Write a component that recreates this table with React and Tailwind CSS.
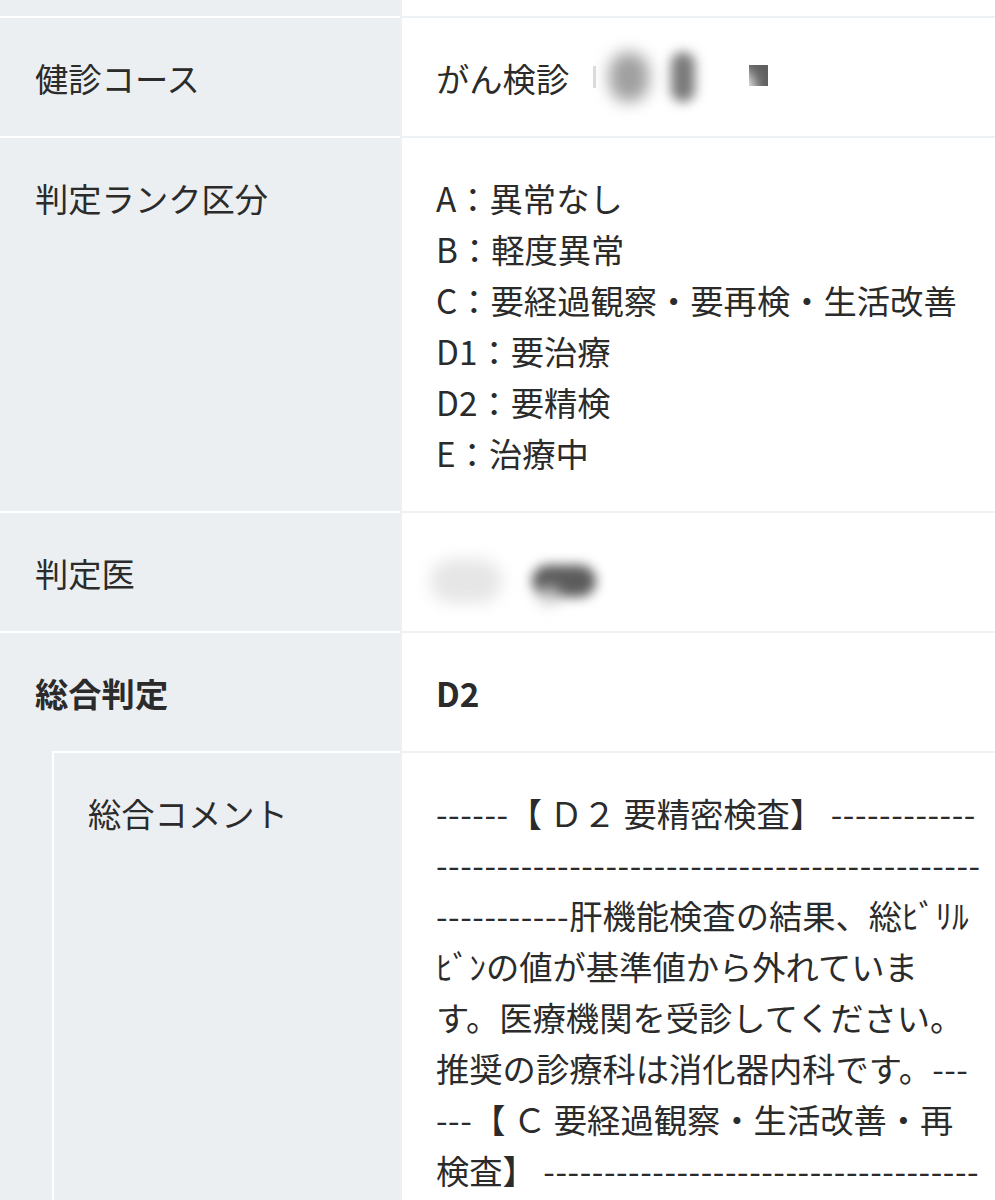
import React from "react";

const LBL = "bg-[#ebeff1]";

function Row({ label, children, bold }) {
  return (
    <div className="flex">
      <div className={`w-[400px] shrink-0 ${LBL} border-t-2 border-white px-[35px] py-[33.5px] ${bold ? "font-bold" : ""}`}>
        {label}
      </div>
      <div className={`flex-1 border-t-2 border-l-2 border-[#eef1f3] pl-[34px] pr-[20px] py-[33.5px] ${bold ? "font-bold" : ""}`}>
        {children}
      </div>
    </div>
  );
}

function D({ n }) {
  return <span className="tracking-[0.55px]">{"-".repeat(n)}</span>;
}

const commentLines = [
  <>
    <D n={6} />【 Ｄ２ 要精密検査】 <D n={12} />
  </>,
  <D n={45} />,
  <>
    <D n={11} />肝機能検査の結果、総ﾋﾞﾘﾙ
  </>,
  <>ﾋﾞﾝの値が基準値から外れていま</>,
  <>す。医療機関を受診してください。</>,
  <>
    推奨の診療科は消化器内科です。<D n={3} />
  </>,
  <>
    <D n={3} />【 Ｃ 要経過観察・生活改善・再
  </>,
  <>
    検査】 <D n={36} />
  </>,
];

export default function App() {
  return (
    <div className="w-[995px] min-h-[1200px] bg-white text-[#2b2b2b] text-[33.3px] leading-[51px] font-['Noto_Sans_CJK_JP','Noto_Sans',sans-serif] overflow-hidden">
      <div className="flex h-[16px]">
        <div className={`w-[400px] shrink-0 ${LBL}`} />
        <div className="flex-1 border-l-2 border-[#eef1f3]" />
      </div>

      <Row label="健診コース">
        <div className="flex items-center h-[51px]">
          <span>がん検診</span>
          <span className="ml-[24px] w-[3px] h-[22px] bg-[#dcdcdc]" />
          <span className="ml-[13px] w-[40px] h-[50px] rounded-full bg-[#a0a0a0] blur-[8px]" />
          <span className="ml-[22px] w-[24px] h-[50px] rounded-full bg-[#7a7a7a] blur-[6px]" />
          <span className="relative ml-[54px] -mt-[4px] w-[19px] h-[21px] bg-[#5f5f5f]">
            <span className="absolute -left-[34px] top-[4px] w-[40px] h-[40px] rounded-full bg-white blur-[7px]" />
          </span>
        </div>
      </Row>

      <Row label="判定ランク区分">
        <div>A：異常なし</div>
        <div>B：軽度異常</div>
        <div>C：要経過観察・要再検・生活改善</div>
        <div>D1：要治療</div>
        <div>D2：要精検</div>
        <div>E：治療中</div>
      </Row>

      <Row label="判定医">
        <div className="flex items-center h-[51px]">
          <span className="-ml-[6px] mt-[18px] w-[72px] h-[44px] rounded-full bg-[#e6e6e6] blur-[8px]" />
          <span className="relative ml-[30px] mt-[18px] w-[64px] h-[32px] rounded-full bg-[#5c5c5c] blur-[6px]">
            <span className="absolute left-[6px] top-[22px] w-[22px] h-[18px] rounded-full bg-[#cfcfcf] blur-[4px]" />
          </span>
        </div>
      </Row>

      <Row label="総合判定" bold>
        <div>D2</div>
      </Row>

      <div className="flex">
        <div className={`w-[52px] shrink-0 ${LBL}`} />
        <div className={`w-[348px] shrink-0 ${LBL} border-t-2 border-l-2 border-white px-[34px] py-[33.5px]`}>
          総合コメント
        </div>
        <div className="flex-1 border-t-2 border-l-2 border-[#eef1f3] pl-[34px] pr-[10px] py-[33.5px]">
          {commentLines.map((l, i) => (
            <div key={i} className="whitespace-pre">
              {l}
            </div>
          ))}
        </div>
      </div>
    </div>
  );
}
